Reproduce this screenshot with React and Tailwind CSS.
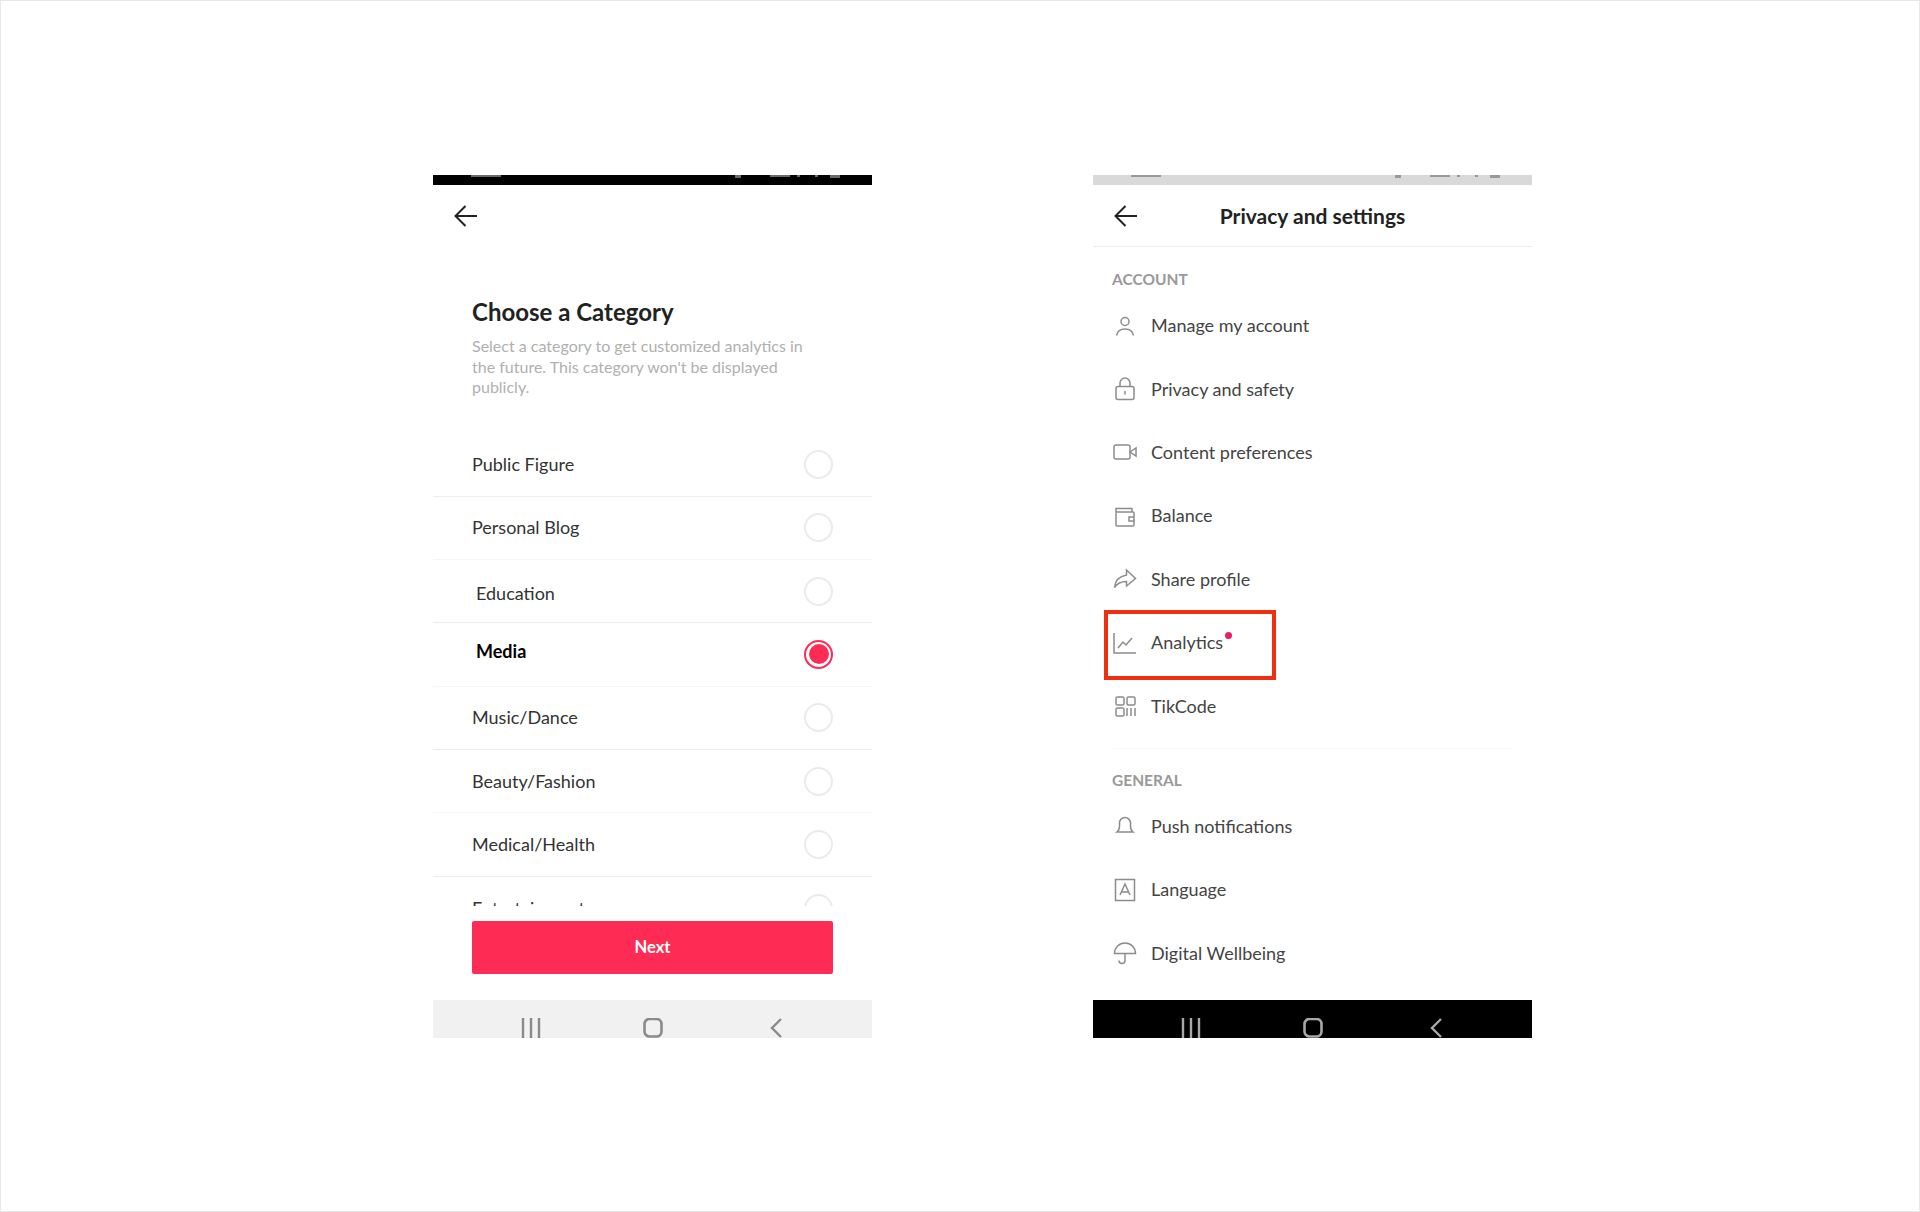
const FONT = "font-['Lato','Open_Sans',sans-serif]";

const categories = [
  { name: "Public Figure", line: "border-[#ececec]" },
  { name: "Personal Blog", line: "border-[#f4f4f4]" },
  { name: "Education", shift: true, nudge: "translate-y-[2px]", line: "border-[#ececec]" },
  { name: "Media", shift: true, active: true, line: "border-[#f7f7f7]" },
  { name: "Music/Dance", line: "border-[#ececec]" },
  { name: "Beauty/Fashion", line: "border-[#f6f6f6]" },
  { name: "Medical/Health", line: "border-[#ececec]" },
  { name: "Entertainment", line: "border-[#ececec]" },
];

function BackArrow() {
  return (
    <svg width="24" height="24" viewBox="0 0 24 24" fill="none" stroke="#222" strokeWidth="2">
      <path d="M23 12H2M11.5 2L1.5 12l10 10" />
    </svg>
  );
}

function NavBar({ dark }) {
  const color = dark ? "#a8a8a8" : "#8a8a8a";
  return (
    <div className={`h-[38px] overflow-hidden ${dark ? "bg-black" : "bg-[#f1f1f1]"}`}>
      <div className="flex h-[38px] items-start pt-[18px] pl-[88px]">
        <svg width="20" height="20" viewBox="0 0 20 20" fill="none" stroke={color} strokeWidth="2.4">
          <path d="M2 0v20M10 0v20M18 0v20" />
        </svg>
        <svg className="ml-[102px]" width="20" height="20" viewBox="0 0 20 20" fill="none" stroke={color} strokeWidth="2.6">
          <rect x="1.5" y="1" width="17" height="17.5" rx="5" />
        </svg>
        <svg className="ml-[107px]" width="14" height="20" viewBox="0 0 14 20" fill="none" stroke={color} strokeWidth="2.4">
          <path d="M11 1L2 10l9 9" />
        </svg>
      </div>
    </div>
  );
}

function StatusBar({ dark }) {
  const bit = dark ? "bg-[#6a6a6a]" : "bg-[#999]";
  return (
    <div className={`flex h-[10px] items-start pl-[38px] ${dark ? "bg-black" : "bg-[#d9d9d9]"}`}>
      <div className={`h-[2px] w-[30px] ${bit}`} />
      <div className={`ml-[234px] h-[3px] w-[6px] ${bit}`} />
      <div className={`ml-[29px] h-[2px] w-[20px] ${bit}`} />
      <div className={`ml-[7px] h-[2px] w-[3px] ${bit}`} />
      <div className={`ml-[15px] h-[2px] w-[3px] ${bit}`} />
      <div className={`ml-[12px] h-[3px] w-[10px] ${bit}`} />
    </div>
  );
}

function Radio({ active }) {
  if (active) {
    return (
      <div className="flex h-[29px] w-[29px] items-center justify-center rounded-full border-[2px] border-[#fe2c55]">
        <div className="h-[20px] w-[20px] rounded-full bg-[#fe2c55]" />
      </div>
    );
  }
  return <div className="h-[29px] w-[29px] rounded-full border-[2px] border-[#ebebeb]" />;
}

function ChooseCategory() {
  return (
    <div className={`flex h-[863px] w-[439px] flex-col bg-white ${FONT}`}>
      <StatusBar dark />
      <div className="flex h-[62px] items-center pl-[21px]">
        <BackArrow />
      </div>
      <div className="px-[39px] pt-[50px]">
        <h1 className="text-[24px] leading-[30px] font-bold text-[#222]">Choose a Category</h1>
        <p className="mt-[9px] w-[352px] text-[16px] leading-[20.7px] text-[#b0b0b0]">
          Select a category to get customized analytics in the future. This category won't be displayed publicly.
        </p>
      </div>
      <div className="mt-[35px] h-[473px] overflow-hidden">
        {categories.map((c) => (
          <div
            key={c.name}
            className={`flex h-[63.4px] items-center justify-between border-b pr-[39px] ${c.shift ? "pl-[43px]" : "pl-[39px]"} ${c.line}`}
          >
            <span className={`text-[18px] ${c.active ? "font-bold text-black -translate-y-[3px]" : "text-[#333]"} ${c.nudge || ""}`}>{c.name}</span>
            <Radio active={c.active} />
          </div>
        ))}
      </div>
      <div className="px-[39px] pt-[15px]">
        <button className="h-[53px] w-full rounded-[2px] bg-[#fe2c55] text-[16.5px] font-bold text-white">Next</button>
      </div>
      <div className="mt-auto">
        <NavBar />
      </div>
    </div>
  );
}

const account = [
  { label: "Manage my account", icon: <><circle cx="12" cy="7.5" r="4" /><path d="M3.5 21.5c1-5 4.5-6.5 8.5-6.5s7.500 1.500 8.500 6.500" /></> },
  { label: "Privacy and safety", icon: <><rect x="3" y="9.500" width="18" height="13" rx="2" /><path d="M7 9.500V6a5 5 0 0 1 10 0v3.500M12 14v3.500" /></> },
  { label: "Content preferences", icon: <><rect x="1" y="5" width="16" height="14" rx="2" /><path d="M17 12l6-4v8z" /></> },
  { label: "Balance", icon: <><path d="M3 8V4.500h16V8" /><rect x="3" y="8" width="18" height="14" rx="1" /><path d="M21 13h-5v4h5" /></> },
  { label: "Share profile", icon: <path d="M13.500 3l9 8.500-9 7.500v-4.500c-5 0-9 1.500-12 6 .5-6 4-11 12-12.500z" /> },
  { label: "Analytics", dot: true, icon: <><path d="M1 2v20h22" /><path d="M5 17l5-6 3 3 6-7" /></> },
  { label: "TikCode", icon: <><rect x="3" y="3" width="8" height="8" rx="1.500" /><rect x="14" y="3" width="8" height="8" rx="1.500" /><rect x="3" y="14" width="8" height="8" rx="1.500" /><path d="M14 14v8M18 14v8M22 14v8" /></> },
];

const general = [
  { label: "Push notifications", icon: <path d="M4 18c2-1.500 2.500-3 2.500-6V9a5.500 5.500 0 0 1 11 0v3c0 3 .5 4.500 2.500 6zM12 21.500h.01" /> },
  { label: "Language", icon: <><rect x="2.500" y="1.500" width="19" height="21" /><path d="M7 17l5-11 5 11M8.500 14h7" /></> },
  { label: "Digital Wellbeing", icon: <><path d="M1.500 12.500a10.500 10.500 0 0 1 21 0z" /><path d="M12 12.500v7a3 3 0 0 1-6 0" /></> },
];

function MenuRow({ item }) {
  return (
    <div className="flex h-[63.4px] items-center pl-[20px]">
      <svg className="shrink-0" width="24" height="24" viewBox="0 0 24 24" fill="none" stroke="#8c8c8c" strokeWidth="1.500">
        {item.icon}
      </svg>
      <span className="relative ml-[14px] text-[18px] text-[#444]">
        {item.label}
        {item.dot && <span className="absolute top-[3px] -right-[9px] h-[7px] w-[7px] rounded-full bg-[#e91e63]" />}
      </span>
    </div>
  );
}

function PrivacySettings() {
  return (
    <div className={`relative flex h-[863px] w-[439px] flex-col bg-white ${FONT}`}>
      <StatusBar />
      <div className="relative flex h-[62px] items-center justify-center border-b border-[#ededed]">
        <div className="absolute left-[21px] top-[19px]">
          <BackArrow />
        </div>
        <span className="text-[21px] font-bold text-[#222]">Privacy and settings</span>
      </div>
      <div className="pt-[22px] pl-[19px] text-[15.5px] leading-[20px] font-bold text-[#999]">ACCOUNT</div>
      <div className="mt-[5px]">
        {account.map((item) => <MenuRow key={item.label} item={item} />)}
      </div>
      <div className="mx-[20px] mt-[10px] border-b border-[#f8f8f8]" />
      <div className="pt-[21px] pl-[19px] text-[15.5px] leading-[20px] font-bold text-[#999]">GENERAL</div>
      <div className="mt-[5px]">
        {general.map((item) => <MenuRow key={item.label} item={item} />)}
      </div>
      <div className="mt-auto">
        <NavBar dark />
      </div>
      {/* red highlight around Analytics */}
      <div className="absolute left-[11px] top-[435px] h-[70px] w-[172px] border-[4px] border-[#ee2f10]" />
    </div>
  );
}

export default function App() {
  return (
    <div className="flex h-[1212px] w-[1920px] items-start gap-[221px] border border-[#e8e8e8] bg-white pt-[174px] pl-[432px]">
      <ChooseCategory />
      <PrivacySettings />
    </div>
  );
}
